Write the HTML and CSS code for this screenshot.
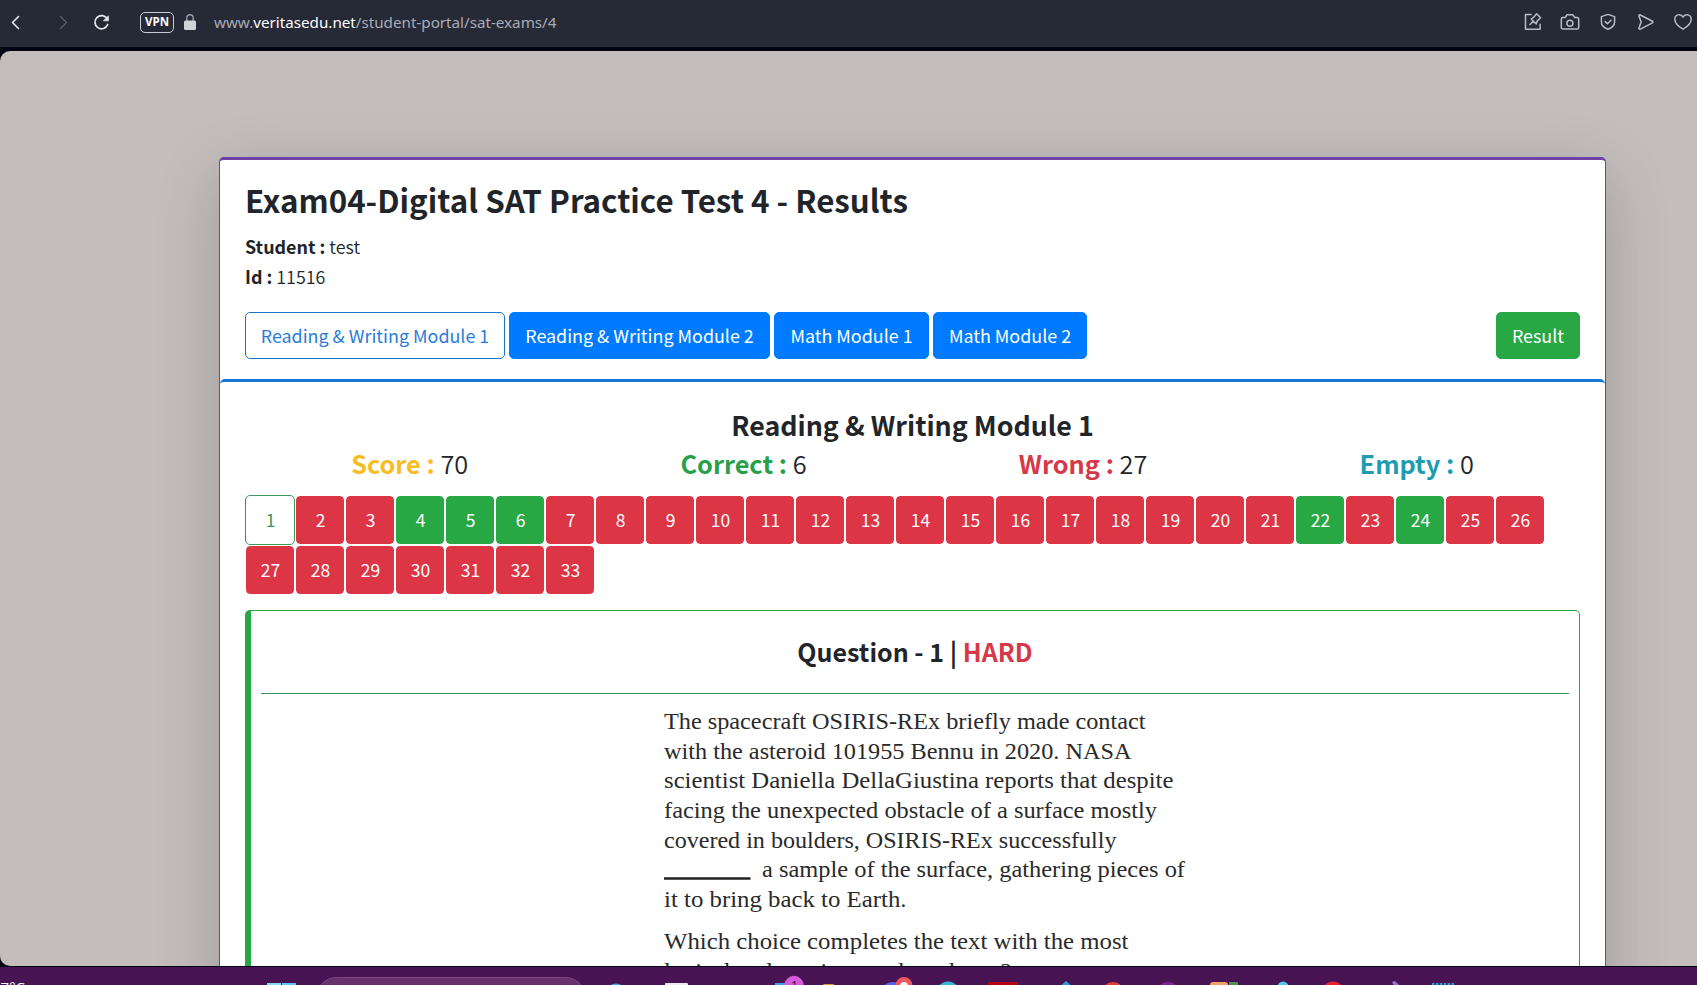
FILE: index.html
```html
<!DOCTYPE html>
<html lang="en">
<head>
<meta charset="utf-8">
<title>Exam Results</title>
<link rel="stylesheet" href="styles.css">
</head>
<body>
<header class="toolbar">
  <svg class="nav-icons" width="120" height="47" viewBox="0 0 120 47" fill="none" stroke-linecap="round" stroke-linejoin="round">
    <path d="M18.5 16.5 12.5 22.5 18.5 28.5" stroke="#e6e8ee" stroke-width="1.6"/>
    <path d="M60.5 16.5 66.5 22.5 60.5 28.5" stroke="#5b5e69" stroke-width="1.4"/>
    <path d="M107.3 19A6.6 6.6 0 1 0 107.7 24.5" stroke="#e6e8ee" stroke-width="1.7"/>
    <path d="M108.4 16.2V20.8H103.8Z" fill="#e6e8ee" stroke="#e6e8ee" stroke-width=".8"/>
  </svg>
  <span class="vpn">VPN</span>
  <svg class="lock" width="14" height="18" viewBox="0 0 14 18"><path d="M3.8 8V5a3.2 3.2 0 0 1 6.4 0v3" fill="none" stroke="#989ba2" stroke-width="1.4"/><rect x="1" y="7.500" width="12" height="9.500" rx="1.500" fill="#d0d3d7"/></svg>
  <div class="url">www.<b>veritasedu.net</b>/student-portal/sat-exams/4</div>
  <svg class="tool-icons" width="187" height="47" viewBox="1510 0 187 47" fill="none" stroke="#b9bcc7" stroke-width="1.5" stroke-linecap="round" stroke-linejoin="round">
    <path d="M1531 14.6h-5.5v14.6h14.6v-5M1530 24.5l3.3-3.3M1531.2 19l5 5 .8-2.800 3.600-3.400-4-4-3.100 3.600Z"/>
    <path d="M1563 17.500h2.200l1.700-2.700h6l1.800 2.700h2.300a1.700 1.700 0 0 1 1.700 1.700v8.200a1.700 1.700 0 0 1-1.700 1.700h-14a1.700 1.700 0 0 1-1.700-1.700v-8.200a1.700 1.700 0 0 1 1.700-1.700Z"/><circle cx="1569.900" cy="23.200" r="3"/>
    <path d="M1608 14.400 1614.600 16.600V22c0 3.700-2.600 5.800-6.600 7.300-4-1.500-6.600-3.600-6.600-7.300v-5.400ZM1605.200 21.600l2.200 2.200 3.600-3.600"/>
    <path d="M1640.300 15 1652 21c1.200.6 1.200 1.500 0 2.100L1640.300 29.100c-1 .5-1.700-.2-1.300-1.200l2.200-5.800-2.200-5.900c-.4-1 .3-1.700 1.300-1.200Z"/>
    <path d="M1683 29.200c-4.500-2.600-8.200-5.800-8.200-9.900 0-4.700 5.800-6.300 8.200-2.300 2.400-4 8.200-2.400 8.200 2.300 0 4.100-3.700 7.300-8.200 9.900Z"/>
  </svg>
</header>
<main class="page">
  <section class="results">
    <div class="summary">
      <h1>Exam04-Digital SAT Practice Test 4 - Results</h1>
      <p><b>Student :</b> test</p>
      <p><b>Id :</b> 11516</p>
      <nav class="modules">
        <button class="btn outline w260">Reading &amp; Writing Module 1</button>
        <button class="btn w261">Reading &amp; Writing Module 2</button>
        <button class="btn w155">Math Module 1</button>
        <button class="btn w154">Math Module 2</button>
        <button class="btn result">Result</button>
      </nav>
    </div>
    <div class="module">
      <h2>Reading &amp; Writing Module 1</h2>
      <div class="stats">
        <div><b class="yellow">Score :</b> 70</div>
        <div><b class="green">Correct :</b> 6</div>
        <div><b class="red">Wrong :</b> 27</div>
        <div><b class="teal">Empty :</b> 0</div>
      </div>
      <div class="numbers">
        <span class="n active">1</span><span class="n">2</span><span class="n">3</span><span class="n ok">4</span><span class="n ok">5</span><span class="n ok">6</span><span class="n">7</span><span class="n">8</span><span class="n">9</span><span class="n">10</span><span class="n">11</span><span class="n">12</span><span class="n">13</span><span class="n">14</span><span class="n">15</span><span class="n">16</span><span class="n">17</span><span class="n">18</span><span class="n">19</span><span class="n">20</span><span class="n">21</span><span class="n ok">22</span><span class="n">23</span><span class="n ok">24</span><span class="n">25</span><span class="n">26</span><span class="n">27</span><span class="n">28</span><span class="n">29</span><span class="n">30</span><span class="n">31</span><span class="n">32</span><span class="n">33</span>
      </div>
      <article class="question">
        <h3>Question - 1 | <span class="red">HARD</span></h3>
        <svg class="passage" width="540" height="310" viewBox="660 694 540 310">
          <text x="664" y="729" textLength="481.500" lengthAdjust="spacingAndGlyphs">The spacecraft OSIRIS-REx briefly made contact</text>
          <text x="664" y="759" textLength="467.500" lengthAdjust="spacingAndGlyphs">with the asteroid 101955 Bennu in 2020. NASA</text>
          <text x="664" y="788" textLength="509.500" lengthAdjust="spacingAndGlyphs">scientist Daniella DellaGiustina reports that despite</text>
          <text x="664" y="818" textLength="493" lengthAdjust="spacingAndGlyphs">facing the unexpected obstacle of a surface mostly</text>
          <text x="664" y="848" textLength="452.500" lengthAdjust="spacingAndGlyphs">covered in boulders, OSIRIS-REx successfully</text>
          <path d="M664 878.500H750.500" stroke="#222" stroke-width="2.600"/>
          <text x="762" y="877" textLength="423" lengthAdjust="spacingAndGlyphs">a sample of the surface, gathering pieces of</text>
          <text x="664" y="907" textLength="242.500" lengthAdjust="spacingAndGlyphs">it to bring back to Earth.</text>
          <text x="664" y="949" textLength="464.500" lengthAdjust="spacingAndGlyphs">Which choice completes the text with the most</text>
          <text x="664" y="979" textLength="347.500" lengthAdjust="spacingAndGlyphs">logical and precise word or phrase?</text>
        </svg>
      </article>
    </div>
  </section>
</main>
<footer class="taskbar">
  <svg width="1697" height="18" viewBox="0 967 1697 18">
    <text class="temp" x="-8" y="992.500">27°C</text>
    <rect x="267" y="983" width="14" height="10" fill="#86d8f8"/><rect x="282" y="983" width="14" height="10" fill="#5fc3f5"/>
    <rect x="316.500" y="977.500" width="269" height="40" rx="20" fill="#66316d" stroke="#7c4a83"/>
    <ellipse cx="616" cy="989" rx="8" ry="5.500" fill="#4aa3ea"/>
    <rect x="665" y="983" width="23" height="10" rx="1" fill="#f0e6f2"/>
    <rect x="775" y="983" width="20" height="10" fill="#3fa0e8"/>
    <circle cx="794" cy="985.500" r="9.700" fill="#d45bdc"/><text class="badge" x="791" y="990">1</text>
    <rect x="823" y="984" width="11" height="8" rx="1" fill="#e5992a"/>
    <ellipse cx="893" cy="989" rx="10" ry="7" fill="#5a62e8"/>
    <circle cx="904" cy="985.500" r="8.500" fill="#ea5662"/><circle cx="904" cy="986" r="4" fill="#fbeef0"/>
    <circle cx="948" cy="993" r="11.500" fill="#36b9d8"/>
    <rect x="988" y="982" width="30" height="10" rx="1" fill="#b5030f"/>
    <path d="m1066 981 9 8h-18z" fill="#2b9be0"/>
    <circle cx="1113" cy="994" r="12" fill="#e23c36"/>
    <circle cx="1168" cy="994" r="12" fill="#7b2999"/>
    <rect x="1210" y="982" width="18" height="9" rx="3" fill="#f2a265"/><rect x="1229" y="982" width="9" height="9" fill="#4d934f"/>
    <circle cx="1283" cy="987" r="5.500" fill="#55c8f3"/>
    <circle cx="1333" cy="993" r="11.500" fill="#e8202e"/>
    <path d="m1392 982 3-1 5 5h-6z" fill="#9d72bd"/>
    <path d="M1432 984.500h22" stroke="#2e9bd0" stroke-width="3" stroke-dasharray="2.500 1.400"/>
  </svg>
</footer>
</body>
</html>
```
FILE: styles.css
```css
* { box-sizing: border-box; }
body { margin: 0; width: 1697px; height: 985px; overflow: hidden; display: flex; flex-direction: column; background: #030414; color: #212529; font-family: "Noto Sans CJK JP", "Noto Sans CJK SC", sans-serif; }
h1, h2, h3, p { margin: 0; }
b { font-weight: 700; }
svg { display: block; flex: none; }
.toolbar { height: 47px; flex: none; display: flex; align-items: center; background: #262a36; }
.vpn { width: 34px; height: 21px; margin: 0 9px 2px 20px; border: 1.5px solid #c9ccd4; border-radius: 5px; color: #fff; font: 700 11.5px/18px "Open Sans", sans-serif; text-align: center; }
.lock { margin-bottom: 3px; }
.url { flex: 1; margin: 0 0 3px 17px; color: #a9acb8; font: 400 15.200px/20px "Noto Sans", sans-serif; }
.url b { font-weight: 400; color: #fff; }
.page { height: 915px; flex: none; margin-top: 4px; padding: 106px 0 0 219px; overflow: hidden; background: #c3bdbc; border-radius: 10px 0 0 10px; }
.results { width: 1387px; height: 1000px; background: #fff; border: 1px solid #6f42a6; border-top-width: 3px; border-radius: 5px; box-shadow: 0 18px 64px rgba(0, 0, 0, .19); }
.summary { height: 219px; padding: 17px 25px 0; }
h1 { height: 45px; font-size: 31.300px; line-height: 46px; white-space: nowrap; }
.summary p { height: 30px; font-size: 17.900px; line-height: 30px; font-weight: 350; position: relative; top: 9px; }
.modules { display: flex; gap: 4px; margin-top: 30px; }
.btn { height: 47px; padding: 0; border: 1px solid #007bff; border-radius: 5px; background: #007bff; color: #fff; font: 400 17.900px/1 "Noto Sans CJK JP", sans-serif; white-space: nowrap; }
.outline { background: #fff; color: #2b7bd8; border-color: #1976c5; }
.w260 { width: 260px; }
.w261 { width: 261px; }
.w155 { width: 155px; }
.w154 { width: 154px; }
.result { width: 84px; margin-left: auto; background: #28a745; border-color: #28a745; }
.module { margin: 0; padding: 23px 25px 0; border-top: 3px solid #1976d9; border-radius: 5px; }
h2 { height: 40px; font-size: 26.800px; line-height: 40px; text-align: center; }
.stats { display: flex; justify-content: space-around; height: 50px; font-size: 25.300px; line-height: 36px; font-weight: 350; text-align: center; }
.yellow { color: #f8bd22; }
.green { color: #28a04a; }
.red { color: #d63848; }
.teal { color: #209bb0; }
.numbers { display: flex; flex-wrap: wrap; }
.n { width: 50px; height: 50px; padding-left: 1px; border: 1px solid #fff; border-radius: 5px; background: #dc3545; background-clip: padding-box; color: #fff; font-size: 17.500px; line-height: 47px; text-align: center; }
.ok { background-color: #28a745; }
.active { background: #fff; color: #3c9a58; border-color: #3c9a58; }
.question { height: 500px; margin-top: 15px; padding: 0 10px; border: 1px solid #28a745; border-left-width: 6px; border-radius: 5px; }
h3 { height: 83px; border-bottom: 1px solid #35955a; font-size: 25px; line-height: 81px; text-align: center; }
.passage { margin-left: 399px; }
.passage text { font: 24px "Liberation Serif", serif; fill: #2a2a2a; }
.taskbar { height: 18px; margin-top: 1px; flex: none; background: #481352; }
.temp { font: 15px "Open Sans", sans-serif; fill: #fff; }
.badge { font: 12px "Open Sans", sans-serif; fill: #281030; }
```
